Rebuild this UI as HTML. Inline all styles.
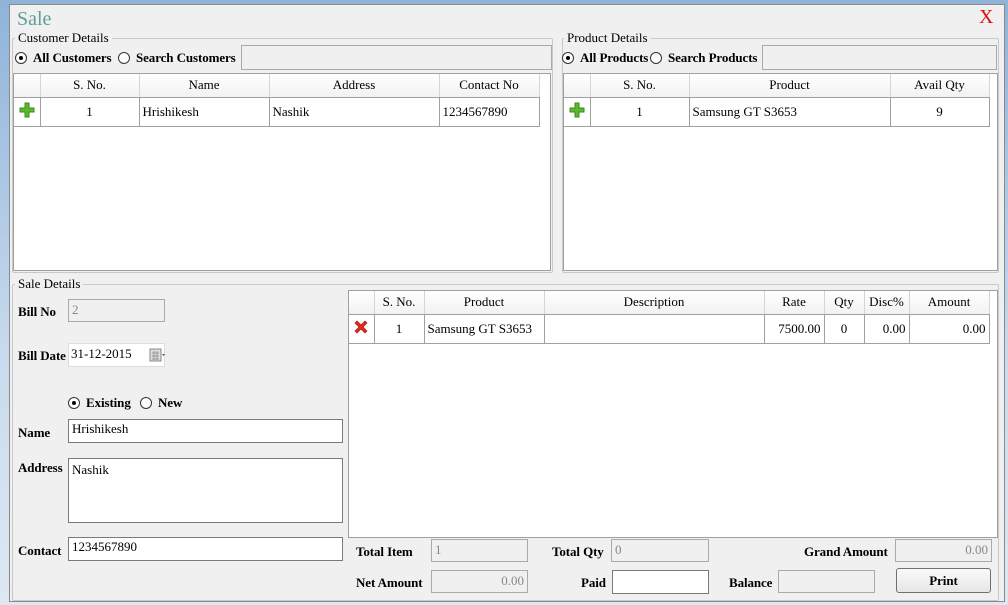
<!DOCTYPE html>
<html><head><meta charset="utf-8"><style>
*{box-sizing:border-box;margin:0;padding:0}
body{width:1008px;height:605px;overflow:hidden;background:linear-gradient(180deg,#8fb3d9,#c9dbee 60%,#dde8f3);font-family:"Liberation Serif",serif;font-size:13px;color:#000;position:relative}
.a{position:absolute}
.win{left:9px;top:4px;width:996px;height:598px;background:#f0f0f0;border:1px solid #8a8a8a}
.grp{border:1px solid #c8c8c8;border-radius:2px}
.gt{background:#f0f0f0;padding:0 3px;font-size:13px}
.grid{background:#fff;border:1px solid #a0a0a0}
table{border-collapse:collapse;font-family:"Liberation Serif",serif;font-size:13px;position:absolute;left:0;top:0}
th{font-weight:normal;height:23px;background:linear-gradient(#fff,#f2f2f2);border-right:1px solid #d5d5d5;border-bottom:1px solid #a0a0a0;padding:0}
td{height:29px;border-right:1px solid #a0a0a0;border-bottom:1px solid #a0a0a0;padding:0 3px}
.c{text-align:center}.r{text-align:right}
.lb{font-weight:bold;font-size:13px;letter-spacing:-0.1px;white-space:nowrap}
.tb{background:#fff;border:1px solid #7a7a7a;font-size:13px;padding:1px 3px}
.dis{background:#f0f0f0;border:1px solid #aaa;color:#888;font-size:13px;padding:2px 3px}
.rad{position:absolute;width:12px;height:12px;border:1px solid #333;border-radius:50%;background:#fff}
.rad.on:after{content:"";position:absolute;left:3px;top:3px;width:4px;height:4px;background:#000;border-radius:50%}
</style></head><body>
<div class="a win"></div>
<div class="a" style="left:17px;top:8px;font-size:20px;color:#5f9e95">Sale</div>
<div class="a" style="left:979px;top:6px;font-size:20px;color:#e01010">X</div>

<div class="a grp" style="left:12px;top:38px;width:541px;height:235px"></div>
<div class="a gt" style="left:15px;top:30px">Customer Details</div>
<span class="rad on" style="left:15px;top:52px"></span><div class="a lb" style="left:33px;top:50px">All Customers</div>
<span class="rad" style="left:118px;top:52px"></span><div class="a lb" style="left:136px;top:50px">Search Customers</div>
<div class="a dis" style="left:241px;top:45px;width:311px;height:25px"></div>
<div class="a grid" style="left:13px;top:73px;width:538px;height:198px">
<table><tr><th style="width:26px"></th><th style="width:99px">S. No.</th><th style="width:130px">Name</th><th style="width:170px">Address</th><th style="width:100px">Contact No</th></tr>
<tr><td class="c"><svg width="16" height="16" viewBox="0 0 16 16"><path d="M6 1h4v5h5v4h-5v5H6v-5H1V6h5z" fill="#5cb82e" stroke="#3d8a1c"/></svg></td><td class="c">1</td><td>Hrishikesh</td><td>Nashik</td><td>1234567890</td></tr></table></div>

<div class="a grp" style="left:562px;top:38px;width:437px;height:235px"></div>
<div class="a gt" style="left:564px;top:30px">Product Details</div>
<span class="rad on" style="left:562px;top:52px"></span><div class="a lb" style="left:580px;top:50px">All Products</div>
<span class="rad" style="left:650px;top:52px"></span><div class="a lb" style="left:668px;top:50px">Search Products</div>
<div class="a dis" style="left:762px;top:45px;width:235px;height:25px"></div>
<div class="a grid" style="left:563px;top:73px;width:435px;height:198px">
<table><tr><th style="width:26px"></th><th style="width:99px">S. No.</th><th style="width:201px">Product</th><th style="width:99px">Avail Qty</th></tr>
<tr><td class="c"><svg width="16" height="16" viewBox="0 0 16 16"><path d="M6 1h4v5h5v4h-5v5H6v-5H1V6h5z" fill="#5cb82e" stroke="#3d8a1c"/></svg></td><td class="c">1</td><td>Samsung GT S3653</td><td class="c">9</td></tr></table></div>

<div class="a grp" style="left:12px;top:284px;width:987px;height:317px"></div>
<div class="a gt" style="left:15px;top:276px">Sale Details</div>
<div class="a lb" style="left:18px;top:304px">Bill No</div>
<div class="a dis" style="left:68px;top:299px;width:97px;height:23px">2</div>
<div class="a lb" style="left:18px;top:348px">Bill Date</div>
<div class="a" style="left:68px;top:343px;width:97px;height:24px;background:#fff;border:1px solid #ddd;padding:2px 2px">31-12-2015
<svg class="a" style="left:80px;top:4px" width="16" height="14" viewBox="0 0 16 14"><rect x="1" y="1" width="11" height="12" fill="#ddd" stroke="#888"/><path d="M3 5h7M3 8h7M3 11h7M5 3v9M8 3v9" stroke="#999"/><path d="M13 6h3l-1.5 2z" fill="#555"/></svg></div>
<span class="rad on" style="left:68px;top:397px"></span><div class="a lb" style="left:86px;top:395px">Existing</div>
<span class="rad" style="left:140px;top:397px"></span><div class="a lb" style="left:158px;top:395px">New</div>
<div class="a lb" style="left:18px;top:425px">Name</div>
<div class="a tb" style="left:68px;top:419px;width:275px;height:24px">Hrishikesh</div>
<div class="a lb" style="left:18px;top:460px">Address</div>
<div class="a tb" style="left:68px;top:458px;width:275px;height:65px;padding-top:3px">Nashik</div>
<div class="a lb" style="left:18px;top:543px">Contact</div>
<div class="a tb" style="left:68px;top:537px;width:275px;height:24px">1234567890</div>

<div class="a grid" style="left:348px;top:290px;width:650px;height:248px">
<table><tr><th style="width:25px"></th><th style="width:50px">S. No.</th><th style="width:120px">Product</th><th style="width:220px">Description</th><th style="width:60px">Rate</th><th style="width:40px">Qty</th><th style="width:45px">Disc%</th><th style="width:80px">Amount</th></tr>
<tr><td class="c"><svg width="16" height="16" viewBox="0 0 16 16"><path d="M2 4l2-2 4 4 4-4 2 2-4 4 4 4-2 2-4-4-4 4-2-2 4-4z" fill="#e02b20" stroke="#a01810" stroke-width=".7"/></svg></td><td class="c">1</td><td>Samsung GT S3653</td><td></td><td class="r">7500.00</td><td class="c">0</td><td class="r">0.00</td><td class="r">0.00</td></tr></table></div>

<div class="a lb" style="left:356px;top:544px">Total Item</div>
<div class="a dis" style="left:431px;top:539px;width:97px;height:23px">1</div>
<div class="a lb" style="left:552px;top:544px">Total Qty</div>
<div class="a dis" style="left:611px;top:539px;width:98px;height:23px">0</div>
<div class="a lb" style="left:804px;top:544px">Grand Amount</div>
<div class="a dis r" style="left:895px;top:539px;width:97px;height:23px">0.00</div>
<div class="a lb" style="left:356px;top:575px">Net Amount</div>
<div class="a dis r" style="left:431px;top:570px;width:97px;height:23px">0.00</div>
<div class="a lb" style="left:581px;top:575px">Paid</div>
<div class="a tb" style="left:612px;top:570px;width:97px;height:24px"></div>
<div class="a lb" style="left:729px;top:575px">Balance</div>
<div class="a dis" style="left:778px;top:570px;width:97px;height:23px"></div>
<div class="a lb c" style="left:896px;top:568px;width:95px;height:25px;border:1px solid #707070;border-radius:3px;background:linear-gradient(#fafafa,#e6e6e6);padding-top:4px">Print</div>
</body></html>
